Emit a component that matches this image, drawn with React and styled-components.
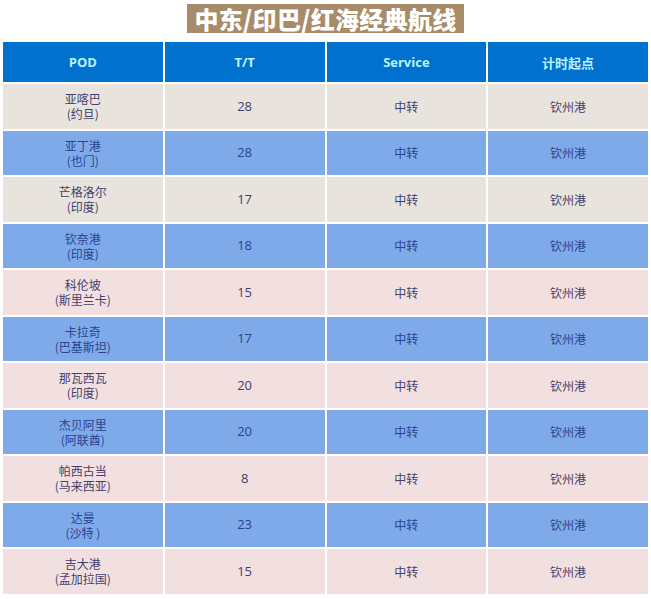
import React from "react";
import styled, { createGlobalStyle } from "styled-components";

const Global = createGlobalStyle`
  html, body { margin: 0; padding: 0; background: #ffffff; }
  body { font-family: "Noto Sans", "Noto Sans CJK SC", sans-serif; }
`;

const Page = styled.div`
  width: 651px;
  height: 599px;
  display: flex;
  flex-direction: column;
  align-items: center;
  overflow: hidden;
`;

const Title = styled.h1`
  margin: 4px 0 9px 0;
  padding: 0 7px;
  height: 29px;
  line-height: 29px;
  background: #a88b69;
  color: #ffffff;
  font-family: "Noto Sans CJK SC", sans-serif;
  font-weight: 900;
  font-size: 24px;
  letter-spacing: 0.3px;
`;

const Table = styled.div`
  width: 645px;
  display: grid;
  grid-template-columns: repeat(4, 1fr);
  grid-auto-rows: 44.5px;
  grid-template-rows: 40px;
  column-gap: 2px;
  row-gap: 2px;
`;

const HeadCell = styled.div`
  background: #0071ce;
  color: #b8f2ff;
  font-family: "Open Sans", "Noto Sans CJK SC", sans-serif;
  font-weight: 700;
  font-size: 13px;
  display: flex;
  align-items: center;
  justify-content: center;
`;

const tones = {
  beige: { bg: "#e8e4dd", fg: "#43406e" },
  blue: { bg: "#7eaaea", fg: "#2c4390" },
  pink: { bg: "#f2dfdf", fg: "#463f6e" },
};

const Cell = styled.div`
  background: ${(p) => tones[p.$tone].bg};
  color: ${(p) => tones[p.$tone].fg};
  font-family: "Noto Sans CJK SC", sans-serif;
  font-size: 12px;
  line-height: 15px;
  display: flex;
  align-items: center;
  justify-content: center;
  text-align: center;
  white-space: pre-line;
`;

const Num = styled.span`
  font-family: "Open Sans", "Noto Sans", sans-serif;
  font-size: 13px;
`;

const rows = [
  ["亚喀巴", "(约旦)", "28", "beige"],
  ["亚丁港", "(也门)", "28", "blue"],
  ["芒格洛尔", "(印度)", "17", "beige"],
  ["钦奈港", "(印度)", "18", "blue"],
  ["科伦坡", "(斯里兰卡)", "15", "pink"],
  ["卡拉奇", "(巴基斯坦)", "17", "blue"],
  ["那瓦西瓦", "(印度)", "20", "pink"],
  ["杰贝阿里", "(阿联酋)", "20", "blue"],
  ["帕西古当", "(马来西亚)", "8", "pink"],
  ["达曼", "(沙特 )", "23", "blue"],
  ["吉大港", "(孟加拉国)", "15", "pink"],
];

export default function App() {
  return (
    <Page>
      <Global />
      <Title>中东/印巴/红海经典航线</Title>
      <Table>
        <HeadCell>POD</HeadCell>
        <HeadCell>T/T</HeadCell>
        <HeadCell>Service</HeadCell>
        <HeadCell>计时起点</HeadCell>
        {rows.map(([city, country, tt, tone]) => (
          <React.Fragment key={city}>
            <Cell $tone={tone}>{`${city}\n${country}`}</Cell>
            <Cell $tone={tone}>
              <Num>{tt}</Num>
            </Cell>
            <Cell $tone={tone}>中转</Cell>
            <Cell $tone={tone}>钦州港</Cell>
          </React.Fragment>
        ))}
      </Table>
    </Page>
  );
}
